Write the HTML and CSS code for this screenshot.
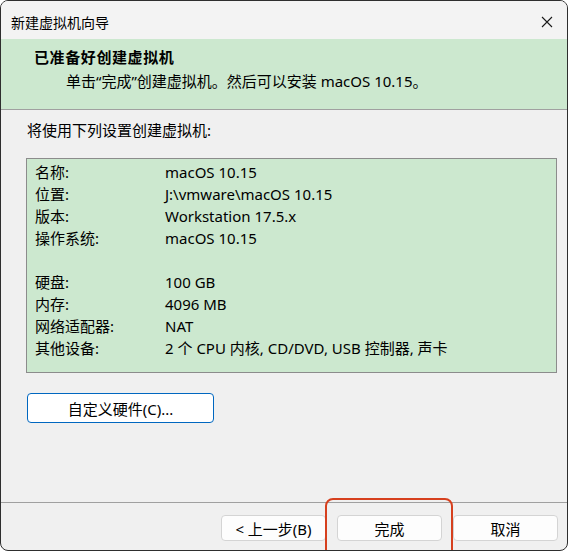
FILE: index.html
```html
<!DOCTYPE html>
<html lang="zh-CN">
<head>
    <meta charset="UTF-8">
    <title>新建虚拟机向导</title>
    <link rel="stylesheet" href="styles.css">
</head>
<body>
    <div class="window">
        <div class="titlebar">
            <span class="title">新建虚拟机向导</span>
            <span class="close">
                <svg width="12" height="12" viewBox="0 0 12 12"><path d="M1 1L11 11M11 1L1 11" stroke="#1a1a1a" stroke-width="1.1" fill="none"/></svg>
            </span>
        </div>

        <div class="header">
            <div class="heading">已准备好创建虚拟机</div>
            <div class="subtitle">单击“完成”创建虚拟机。然后可以安装 macOS 10.15。</div>
        </div>

        <div class="content">
            <div class="intro">将使用下列设置创建虚拟机:</div>
            <div class="summary">
                <div class="row"><span class="label">名称:</span><span>macOS 10.15</span></div>
                <div class="row"><span class="label">位置:</span><span>J:\vmware\macOS 10.15</span></div>
                <div class="row"><span class="label">版本:</span><span>Workstation 17.5.x</span></div>
                <div class="row"><span class="label">操作系统:</span><span>macOS 10.15</span></div>
                <div class="row"></div>
                <div class="row"><span class="label">硬盘:</span><span>100 GB</span></div>
                <div class="row"><span class="label">内存:</span><span>4096 MB</span></div>
                <div class="row"><span class="label">网络适配器:</span><span>NAT</span></div>
                <div class="row"><span class="label">其他设备:</span><span>2 个 CPU 内核, CD/DVD, USB 控制器, 声卡</span></div>
            </div>
            <button class="custom-btn">自定义硬件(C)...</button>
        </div>

        <div class="footer">
            <button class="btn">&lt; 上一步(B)</button>
            <button class="btn">完成</button>
            <button class="btn">取消</button>
            <div class="highlight"></div>
        </div>
    </div>
</body>
</html>
```

FILE: styles.css
```css
html, body {
    margin: 0;
    padding: 0;
    background-color: #ffffff;
}

body {
    font-family: "Noto Sans", "Noto Sans CJK SC", sans-serif;
    font-size: 15px;
    color: #000000;
}

.window {
    width: 568px;
    height: 551px;
    box-sizing: border-box;
    border: 1px solid #2e2e2e;
    border-radius: 8px;
    background-color: #f0f0f0;
    display: flex;
    flex-direction: column;
    overflow: hidden;
}

.titlebar {
    height: 38px;
    display: flex;
    align-items: center;
    justify-content: space-between;
    padding: 0 14px 0 10px;
    background-color: #f3f3f3;
    font-size: 14px;
}

.title {
    padding-top: 4px;
}

.close {
    display: flex;
    padding-top: 4px;
}

.header {
    height: 71px;
    background-color: #cce8cf;
    border-bottom: 1px solid #a0a0a0;
    padding-top: 6px;
    box-sizing: border-box;
}

.heading {
    font-weight: bold;
    padding-left: 33px;
    line-height: 24px;
    letter-spacing: 0.6px;
}

.subtitle {
    padding-left: 65px;
    line-height: 25px;
}

.content {
    flex: 1;
    padding: 8px 12px 0 24px;
}

.intro {
    line-height: 24px;
    margin-left: 2px;
}

.summary {
    margin-top: 16px;
    height: 215px;
    box-sizing: border-box;
    border: 1px solid #8c8c8c;
    background-color: #cce8cf;
    padding: 2px 8px;
    margin-left: 1px;
    width: 531px;
}

.row {
    height: 22px;
    line-height: 22px;
    display: flex;
}

.label {
    width: 130px;
}

.custom-btn {
    margin-top: 20px;
    margin-left: 2px;
    width: 187px;
    height: 30px;
    background-color: #ffffff;
    border: 1px solid #0067c0;
    border-radius: 4px;
    font-family: inherit;
    font-size: 15px;
    color: #000000;
}

.footer {
    position: relative;
    height: 48px;
    border-top: 1px solid #a0a0a0;
    display: flex;
    justify-content: flex-end;
    align-items: flex-start;
    gap: 11px;
    padding: 12px 9px 0 0;
    box-sizing: border-box;
}

.btn {
    width: 105px;
    height: 26px;
    background-color: #fdfdfd;
    border: 1px solid #d4d4d4;
    border-radius: 4px;
    font-family: inherit;
    font-size: 15px;
    color: #000000;
    padding: 0;
}

.highlight {
    position: absolute;
    left: 324px;
    top: -5px;
    width: 128px;
    height: 70px;
    box-sizing: border-box;
    border: 2px solid #d6401e;
    border-radius: 8px;
}
```
